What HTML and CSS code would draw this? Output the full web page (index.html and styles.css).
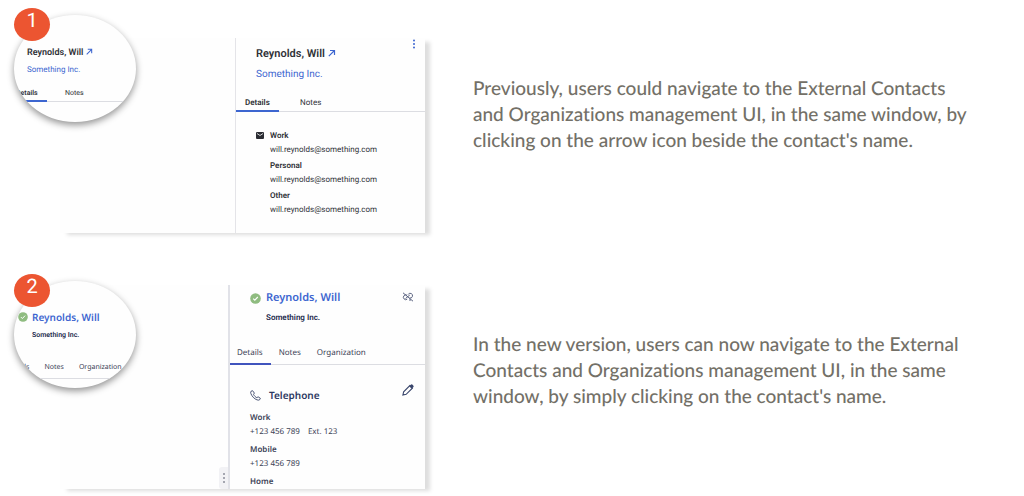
FILE: index.html
```html
<!DOCTYPE html>
<html lang="en">
<head>
<meta charset="utf-8">
<meta name="viewport" content="width=device-width, initial-scale=1">
<title>External contact navigation</title>
<link rel="stylesheet" href="styles.css">
</head>
<body>
<main class="page">
  <section class="step step-before">
    <div class="figure">
      <div class="card">
        <div class="canvas"></div>
        <div class="panel panel-before">
          <button class="icon-button more" aria-label="More options"><svg width="4" height="10" viewBox="0 0 4 10" fill="#3d66d0"><circle cx="2" cy="1.5" r="1"/><circle cx="2" cy="5" r="1"/><circle cx="2" cy="8.500" r="1"/></svg></button>
          <div class="identity">
            <div class="name">Reynolds, Will <a class="open" href="#" aria-label="Open contact"><svg width="8" height="8" viewBox="0 0 8 8" fill="none" stroke="#3d66d0" stroke-width="1.200"><path d="M2 1.500h4.500V6M6.500 1.500.8 7.200"/></svg></a></div>
            <a class="org" href="#">Something Inc.</a>
          </div>
          <div class="tabs"><button class="tab active">Details</button><button class="tab">Notes</button></div>
          <div class="emails">
            <svg class="mail" width="8" height="7" viewBox="0 0 8 7"><rect width="8" height="7" rx="1" fill="#2b2d33"/><path d="m1 1.500 3 2 3-2" fill="none" stroke="#fff" stroke-width=".8"/></svg>
            <dl class="fields">
              <div><dt>Work</dt><dd>will.reynolds@something.com</dd></div>
              <div><dt>Personal</dt><dd>will.reynolds@something.com</dd></div>
              <div><dt>Other</dt><dd>will.reynolds@something.com</dd></div>
            </dl>
          </div>
        </div>
      </div>
      <div class="lens lens-before">
        <div class="identity">
          <div class="name">Reynolds, Will <a class="open" href="#" aria-label="Open contact"><svg width="7" height="7" viewBox="0 0 8 8" fill="none" stroke="#3d66d0" stroke-width="1.200"><path d="M2 1.500h4.500V6M6.500 1.500.8 7.200"/></svg></a></div>
          <a class="org" href="#">Something Inc.</a>
        </div>
        <div class="tabs"><button class="tab active">Details</button><button class="tab">Notes</button></div>
      </div>
      <span class="badge">1</span>
    </div>
    <p class="caption">Previously, users could navigate to the External Contacts and Organizations management UI, in the same window, by clicking on the arrow icon beside the contact's name.</p>
  </section>

  <section class="step step-after">
    <div class="figure">
      <div class="card">
        <div class="canvas"><button class="icon-button grip" aria-label="Resize panel"><svg width="4" height="12" viewBox="0 0 4 12" fill="#8a8d98"><circle cx="2" cy="2" r="1"/><circle cx="2" cy="6" r="1"/><circle cx="2" cy="10" r="1"/></svg></button></div>
        <div class="panel panel-after">
          <button class="icon-button unlink" aria-label="Unlink contact"><svg width="12" height="10" viewBox="0 0 12 10" fill="none" stroke="#4b5474" stroke-width=".9"><path d="M5.200 7.200A2.400 2.400 0 1 1 5 3.200M6 2.600A2.400 2.400 0 1 1 7.500 6M1 .8l10 8.400M7.800 3 3.500 6.500M8 7v2"/></svg></button>
          <div class="identity">
            <svg class="check" width="11" height="11" viewBox="0 0 11 11"><circle cx="5.500" cy="5.500" r="5.300" fill="#8fbc80"/><path d="m3.200 5.600 1.600 1.600 3-3.200" fill="none" stroke="#fff" stroke-width="1.100"/></svg>
            <a class="name" href="#">Reynolds, Will</a>
            <div class="org">Something Inc.</div>
          </div>
          <div class="tabs"><button class="tab active">Details</button><button class="tab">Notes</button><button class="tab">Organization</button></div>
          <div class="phones">
            <div class="phones-head">
              <svg width="11" height="11" viewBox="0 0 11 11" fill="none" stroke="#3b4669" stroke-width=".9" stroke-linejoin="round"><path d="M2.600.7 1 1.300C.2 2 .8 4.600 3.200 7.300c2.500 2.600 5.400 3.300 6.300 2.600l.9-1.600-2.300-1.500-1.300.9C5.600 7.200 4 5.600 3.500 4.300l.9-1.200z"/></svg>
              <h2>Telephone</h2>
              <button class="icon-button edit" aria-label="Edit"><svg width="12" height="12" viewBox="0 0 11 11"><path d="m.8 10.200.7-3L7.200 1.500 9.500 3.800 3.800 9.500z" fill="none" stroke="#39456b"/><path d="M6.600 2 8.300.5q.6-.4 1.100 0l1.100 1.100q.4.600 0 1.100L9 4.400z" fill="#39456b"/></svg></button>
            </div>
            <dl class="fields">
              <div><dt>Work</dt><dd><span>+123 456 789</span><span>Ext. 123</span></dd></div>
              <div><dt>Mobile</dt><dd>+123 456 789</dd></div>
              <div><dt>Home</dt></div>
            </dl>
          </div>
        </div>
      </div>
      <div class="lens lens-after">
        <div class="identity">
          <svg class="check" width="10" height="10" viewBox="0 0 11 11"><circle cx="5.500" cy="5.500" r="5.300" fill="#8fbc80"/><path d="m3.200 5.600 1.600 1.600 3-3.200" fill="none" stroke="#fff" stroke-width="1.100"/></svg>
          <a class="name" href="#">Reynolds, Will</a>
          <div class="org">Something Inc.</div>
        </div>
        <div class="tabs"><button class="tab">Details</button><button class="tab">Notes</button><button class="tab">Organization</button></div>
      </div>
      <span class="badge">2</span>
    </div>
    <p class="caption">In the new version, users can now navigate to the External Contacts and Organizations management UI, in the same window, by simply clicking on the contact's name.</p>
  </section>
</main>
</body>
</html>
```

FILE: styles.css
```css
* { box-sizing: border-box; }
body { margin: 0; background: #fff; color: #2f3136; font-family: Roboto, sans-serif; text-rendering: geometricPrecision; }
button { border: 0; background: none; padding: 0; font: inherit; color: inherit; text-align: left; text-rendering: inherit; }
a { color: #3d66d0; text-decoration: none; }
svg { display: block; }
dl, dd, h2, p { margin: 0; }

.page { padding: 0 50px 6px 14px; }
.step { display: grid; grid-template-columns: minmax(0, 411fr) minmax(0, 501fr); column-gap: 48px; }
.step-before { padding-bottom: 32px; }
.figure { position: relative; }
.caption { font-family: "HK Grotesk", "Lato Medium", Lato, sans-serif; font-size: 19px; line-height: 26px; font-weight: 500; font-variant-ligatures: none; color: #737067; }
.step-before .caption { padding-top: 76px; }
.step-after .caption { padding-top: 66px; }

.card { display: flex; margin-left: 46px; background: #fefefe; box-shadow: 6px 3px 4px -1px #dedede; }
.step-before .card { margin-top: 38px; }
.step-after .card { margin-top: 19px; }
.canvas { flex: 1; display: flex; justify-content: flex-end; align-items: flex-end; }
.panel { position: relative; font-size: 8px; }
.icon-button { display: grid; place-items: center; }

.identity { font-size: 10px; line-height: 16px; }
.name { font-weight: 600; }
.open { display: inline-block; }
.org { display: block; margin-top: 4px; }
.tabs { display: flex; border-bottom: 1px solid #dcdde2; }
.tab { margin-bottom: -1px; border-bottom: 2px solid transparent; white-space: nowrap; }
.tab.active { border-color: #3d66d0; font-weight: 600; }

.panel-before { width: 190px; padding: 8px 0 16px; border-left: 1px solid #e4e4e8; }
.panel-before .identity { padding-left: 20px; }
.panel-before .name { font-size: 11px; }
.panel-before .org { margin-top: 5px; }
.more { position: absolute; top: 1px; right: 9px; }
.panel-before .tabs { margin-top: 11px; }
.panel-before .tab { height: 18px; padding: 1px 10px 0 9px; }
.panel-before .tab.active { width: 43px; }
.panel-before .tab + .tab { padding-left: 21px; }
.emails { display: flex; gap: 6px; padding: 17px 0 0 20px; }
.mail { margin-top: 3px; }
.fields { display: grid; gap: 2px; line-height: 14px; }
dt { font-weight: 600; }
.step-before { padding-bottom: 33px; }

.panel-after { width: 197px; padding-top: 5px; border-left: 2px solid #e1e2e8; font-family: "Noto Sans", sans-serif; color: #3c4256; }
.panel-after .identity, .lens-after .identity { display: grid; justify-content: start; align-items: center; column-gap: 5px; }
.panel-after .identity { grid-template-columns: 11px auto; padding-left: 20px; }
.panel-after .name { font-size: 11px; }
.identity .name + .org { grid-column: 2; }
.panel-after .org { font: 600 8px/16px Roboto, sans-serif; color: #232a4d; }
.unlink { position: absolute; top: 7px; right: 11px; }
.panel-after .tabs { margin-top: 18px; }
.panel-after .tab { height: 21px; padding: 0 8px 2px; }
.panel-after .tab.active { padding-left: 7px; border-color: #4054bd; font-weight: 400; }
.phones { padding: 22px 11px 0 20px; }
.phones-head { display: flex; align-items: center; gap: 8px; height: 16px; margin-bottom: 8px; }
.phones-head h2 { flex: 1; font-size: 10px; line-height: 16px; font-weight: 600; color: #2c3861; }
.edit { align-self: flex-start; margin-top: -3px; }
.phones .fields { gap: 4px; }
.phones dd { display: flex; gap: 8px; }
.grip { width: 9px; height: 22px; background: #f2f2f5; border-radius: 3px 0 0 3px; }

.lens { position: absolute; left: 0; top: 15px; width: 122px; height: 107px; border-radius: 50%; overflow: hidden; background: #fefefe; box-shadow: 0 3px 7px #0000006b; font-size: 7px; }
.lens .tabs { width: 140px; }
.lens-before .identity { padding: 30px 0 0 13px; font-size: 9px; }
.lens-before .org { margin-top: 1px; font-size: 8px; }
.lens-before .tabs { margin-top: 8px; }
.lens-before .tab { height: 16px; padding: 0 9px 0 2px; }
.lens-before .tab.active { width: 33px; }
.lens-before .tab + .tab { padding-left: 18px; }
.lens-after { font-family: "Noto Sans", sans-serif; color: #3c4256; }
.lens-after .identity { grid-template-columns: 10px auto; padding: 28px 0 0 4px; column-gap: 4px; }
.lens-after .org { margin-top: 2px; font: 600 7px/16px Roboto, sans-serif; color: #232a4d; }
.lens-after .tabs { margin: 16px 0 0 -7px; }
.lens-after .tab { height: 20px; padding: 0 15px 2px 0; }

.badge { position: absolute; left: 0; top: 8px; width: 36px; height: 33px; border-radius: 50%; background: #ec5531; color: #fff; font-size: 20px; line-height: 25px; text-align: center; }
```
